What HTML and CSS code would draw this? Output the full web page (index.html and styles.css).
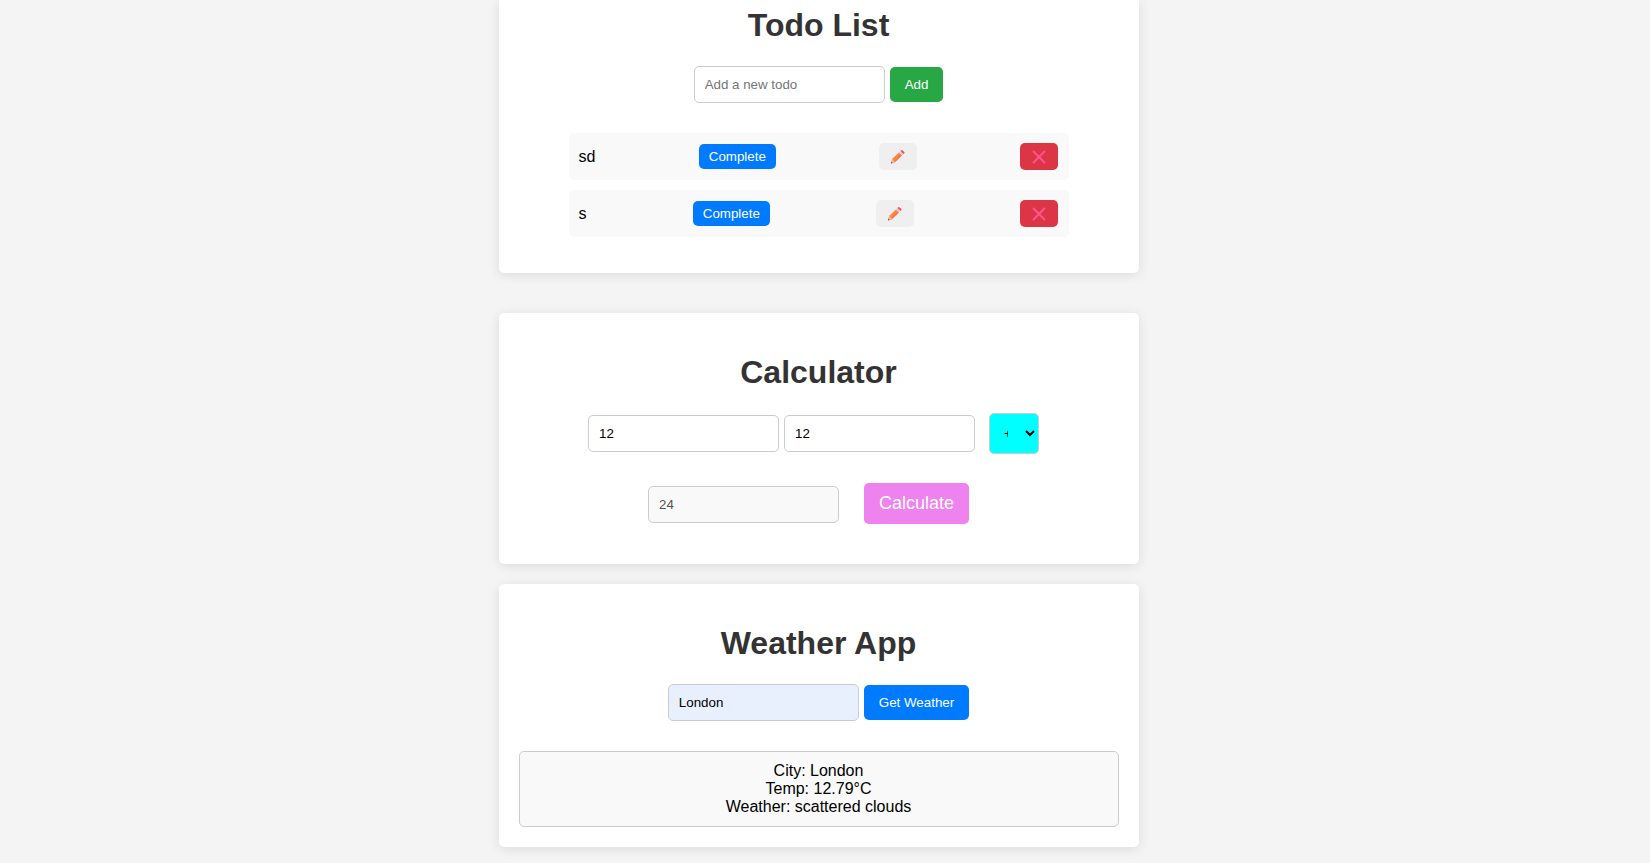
FILE: index.html
```html
<!DOCTYPE html>
<html lang="en">
<head>
<meta charset="utf-8">
<title>Todo, Calculator and Weather</title>
<link rel="stylesheet" href="styles.css">
</head>
<body>
<svg class="sprite" aria-hidden="true">
  <defs>
    <linearGradient id="wood" x1="3" y1="8" x2="11" y2="15" gradientUnits="userSpaceOnUse">
      <stop offset="0" stop-color="#ffa04a"/>
      <stop offset="1" stop-color="#f4593a"/>
    </linearGradient>
    <symbol id="pencil" viewBox="0 0 18 17">
      <path d="M3.2 10.8 9.9 4.4 13 7.5 6.4 14 2 15.4Z" fill="url(#wood)"/>
      <path d="M3.2 11 6.3 14 2 15.5Z" fill="#e8b7a0"/>
      <path d="M2.5 13.8 3.7 14.9 1.9 15.5Z" fill="#5c4a60"/>
      <path d="M9.7 4.6 11.6 2.9 14.7 5.9 12.9 7.6Z" fill="#dcc9e4"/>
      <path d="M11.4 3 12.3 2.3Q12.9 1.8 13.6 2.4L15.3 4Q15.9 4.6 15.4 5.2L14.6 6Z" fill="#fb4f4c"/>
    </symbol>
    <symbol id="cross" viewBox="0 0 18 17">
      <path d="M3.6 3.5 14.4 14.5M14.4 3.5 3.6 14.5" fill="none" stroke="#fb558c" stroke-width="2" stroke-linecap="round"/>
    </symbol>
  </defs>
</svg>
<main class="page">
  <section class="card card-todo">
    <h1 class="title">Todo List</h1>
    <form class="row row-input">
      <input class="field" type="text" placeholder="Add a new todo" aria-label="New todo">
      <button class="btn btn-add" type="button">Add</button>
    </form>
    <ul class="todos">
      <li class="todo">
        <span>sd</span>
        <button class="btn btn-small btn-blue" type="button">Complete</button>
        <button class="btn btn-small btn-edit" type="button" aria-label="Edit sd"><svg class="icon"><use href="#pencil"/></svg></button>
        <button class="btn btn-small btn-delete" type="button" aria-label="Delete sd"><svg class="icon"><use href="#cross"/></svg></button>
      </li>
      <li class="todo">
        <span>s</span>
        <button class="btn btn-small btn-blue" type="button">Complete</button>
        <button class="btn btn-small btn-edit" type="button" aria-label="Edit s"><svg class="icon"><use href="#pencil"/></svg></button>
        <button class="btn btn-small btn-delete" type="button" aria-label="Delete s"><svg class="icon"><use href="#cross"/></svg></button>
      </li>
    </ul>
  </section>

  <section class="card card-calc">
    <h1 class="title">Calculator</h1>
    <div class="row row-operands">
      <input class="field" type="text" value="12" aria-label="First number">
      <input class="field" type="text" value="12" aria-label="Second number">
      <select class="operator" aria-label="Operation">
        <option>+</option>
        <option>-</option>
        <option>*</option>
        <option>/</option>
      </select>
    </div>
    <div class="row row-result">
      <input class="field field-result" type="text" value="24" aria-label="Result" disabled>
      <button class="btn btn-calc" type="button">Calculate</button>
    </div>
  </section>

  <section class="card">
    <h1 class="title">Weather App</h1>
    <form class="row row-input">
      <input class="field field-filled" type="text" value="London" aria-label="City">
      <button class="btn btn-blue" type="button">Get Weather</button>
    </form>
    <div class="report">
      <div>City: London</div>
      <div>Temp: 12.79°C</div>
      <div>Weather: scattered clouds</div>
    </div>
  </section>
</main>
</body>
</html>
```

FILE: styles.css
```css
* {
  box-sizing: border-box;
}

body {
  margin: 0;
  padding-right: 13px;
  background: #f4f4f4;
  font-family: Arial, "Liberation Sans", sans-serif;
  line-height: 18px;
  overflow: hidden;
}

input,
button,
select {
  font-family: inherit;
}

.sprite {
  display: block;
  width: 0;
  height: 0;
}

.page {
  max-width: 640px;
  margin: 0 auto;
}

.card {
  margin-bottom: 20px;
  padding: 20px;
  border-radius: 5px;
  background: #fff;
  box-shadow: 0 2px 12px rgba(0, 0, 0, 0.1);
  text-align: center;
}

.card-todo {
  margin-bottom: 40px;
  padding: 0 20px 36px;
  border-radius: 0 0 5px 5px;
}

.card-calc {
  padding-bottom: 40px;
}

.title {
  margin: 21px 0;
  color: #333;
  font-size: 32px;
  line-height: 37px;
}

.card-todo .title {
  margin-top: 0;
  padding-top: 7px;
}

.row {
  display: flex;
  justify-content: center;
  align-items: center;
  gap: 5px;
}

.row-input {
  margin: 22px 0 30px;
}

.row-operands {
  margin: 22px 0 29px;
  padding-right: 10px;
}

.row-result {
  gap: 25px;
  padding-right: 20px;
}

.row-operands,
.row-result {
  align-items: baseline;
}

.field {
  width: 191px;
  height: 37px;
  padding: 10px;
  border: 1px solid #ccc;
  border-radius: 5px;
  background: #fff;
}

.field-result {
  background: #f9f9f9;
  color: #545454;
}

.field-filled {
  background: #e8f0fe;
}

.operator {
  width: 50px;
  height: 41px;
  margin-left: 9px;
  padding: 10px 14px 10px 10px;
  border: 1px solid #ccc;
  border-radius: 5px;
  background: #0ff;
  color: #000;
}

.btn {
  padding: 10px 15px;
  border: 0;
  border-radius: 5px;
  color: #fff;
  cursor: pointer;
}

.btn-add {
  background: #28a745;
}

.btn-blue {
  background: #007bff;
}

.btn-calc {
  background: violet;
  font-size: 18px;
}

.btn-small {
  padding: 5px 10px;
}

.btn-edit {
  background: #efefef;
}

.btn-delete {
  background: #dc3545;
}

.icon {
  display: block;
  width: 18px;
  height: 17px;
}

.todos {
  display: grid;
  gap: 10px;
  max-width: 500px;
  margin: 0 auto;
  padding: 0;
  list-style: none;
}

.todo {
  display: flex;
  justify-content: space-between;
  align-items: center;
  padding: 10px;
  border-radius: 5px;
  background: #f9f9f9;
}

.report {
  padding: 10px;
  border: 1px solid #ccc;
  border-radius: 5px;
  background: #f9f9f9;
}
```
